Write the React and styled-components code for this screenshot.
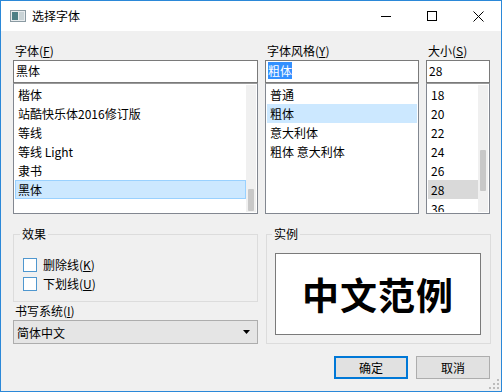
import React from 'react';
import styled, { createGlobalStyle } from 'styled-components';

const Global = createGlobalStyle`
  html, body { margin: 0; padding: 0; background: #f0f0f0; }
  body {
    font-family: "Noto Sans CJK SC", "Noto Sans", sans-serif;
    font-size: 12px;
    color: #000;
  }
  * { box-sizing: border-box; }
`;

const Window = styled.div`
  position: relative;
  width: 502px;
  height: 392px;
  border: 1px solid #2b88d8;
  background: #f0f0f0;
  display: flex;
  flex-direction: column;
  overflow: hidden;
`;

const TitleBar = styled.div`
  height: 30px;
  flex-shrink: 0;
  background: #fff;
  display: flex;
  align-items: center;
`;

const TitleIcon = styled.svg`
  margin-left: 9px;
  width: 16px;
  height: 12px;
`;

const TitleText = styled.div`
  margin-left: 6px;
  flex: 1;
  font-size: 12px;
  line-height: 16px;
`;

const CaptionButton = styled.div`
  width: 46px;
  height: 30px;
  display: flex;
  align-items: center;
  justify-content: center;
`;

const Body = styled.div`
  flex: 1;
  padding: 11px 11px 0 12px;
  display: flex;
  flex-direction: column;
`;

const TopGrid = styled.div`
  display: grid;
  grid-template-columns: 245px 154px 64px;
  column-gap: 7px;
`;

const Column = styled.div`
  display: flex;
  flex-direction: column;
`;

const Label = styled.div`
  height: 18px;
  line-height: 18px;
  padding-left: 2px;
  white-space: nowrap;
`;

const Input = styled.div`
  height: 23px;
  border: 1px solid #7a7a7a;
  background: #fff;
  padding-left: 2px;
  line-height: 20px;
  white-space: nowrap;
`;

const Selected = styled.span`
  background: #3390ff;
  color: #fff;
`;

const List = styled.div`
  height: 131px;
  border: 1px solid #828790;
  border-top-color: #9a9a9a;
  background: #fff;
  padding: 1px;
  display: flex;
  overflow: hidden;
`;

const Items = styled.div`
  flex: 1;
  display: flex;
  flex-direction: column;
  overflow: hidden;
`;

const Item = styled.div`
  flex-shrink: 0;
  height: 19px;
  line-height: 17px;
  padding-left: 2px;
  white-space: nowrap;
  border: 1px solid ${p => (p.$sel === 'focus' ? '#99d1ff' : 'transparent')};
  background: ${p =>
    p.$sel === 'focus' ? '#cce8ff' : p.$sel === 'soft' ? '#cce8ff' : p.$sel === 'gray' ? '#d9d9d9' : 'transparent'};
`;

const Track = styled.div`
  width: 10px;
  background: #f0f0f0;
  display: flex;
  justify-content: center;
`;

const Thumb = styled.div`
  width: 6px;
  border-radius: 1px;
  background: #c8c8c8;
`;

const LowerGrid = styled.div`
  margin-top: 13px;
  display: grid;
  grid-template-columns: 245px 225px;
  column-gap: 8px;
  align-items: start;
`;

const Group = styled.fieldset`
  margin: 0;
  min-width: 0;
  border: 1px solid #dcdcdc;
  padding: ${p => p.$pad};
`;

const Legend = styled.legend`
  padding: 0 2px;
  margin-left: ${p => p.$ml || 0}px;
  line-height: 14px;
  height: 14px;
`;

const CheckRow = styled.div`
  height: 19px;
  display: flex;
  align-items: center;
  padding-left: 3px;
`;

const CheckBox = styled.div`
  width: 14px;
  height: 14px;
  border: 1px solid #4f97cf;
  background: #fff;
  margin-right: 6px;
`;

const Combo = styled.div`
  height: 24px;
  border: 1px solid #adadad;
  background: #e5e5e5;
  display: flex;
  align-items: center;
  padding-left: 3px;
  padding-right: 7px;
`;

const ComboText = styled.div`
  flex: 1;
`;

const SampleBox = styled.div`
  height: 82px;
  border: 1px solid #7a7a7a;
  background: #fff;
  display: flex;
  align-items: center;
  justify-content: center;
  font-family: "Noto Sans CJK SC", sans-serif;
  font-weight: 700;
  font-size: 37px;
  letter-spacing: 1px;
`;

const ButtonRow = styled.div`
  margin-top: 12px;
  display: flex;
  justify-content: flex-end;
  gap: 8px;
`;

const Button = styled.div`
  width: 74px;
  height: 23px;
  background: #e1e1e1;
  border: ${p => (p.$default ? '2px solid #0078d7' : '1px solid #adadad')};
  display: flex;
  align-items: center;
  justify-content: center;
`;

const Grip = styled.svg`
  position: absolute;
  right: 1px;
  bottom: 1px;
  width: 11px;
  height: 11px;
`;

const fonts = ['楷体', '站酷快乐体2016修订版', '等线', '等线 Light', '隶书', '黑体'];
const styles = ['普通', '粗体', '意大利体', '粗体 意大利体'];
const sizes = ['18', '20', '22', '24', '26', '28', '36'];

export default function App() {
  return (
    <>
      <Global />
      <Window>
        <TitleBar>
          <TitleIcon viewBox="0 0 16 12">
            <rect x="0.5" y="0.5" width="15" height="11" fill="#e8ecee" stroke="#8a9aa2" />
            <rect x="2" y="2" width="6" height="8" fill="#4d7f86" />
            <rect x="9" y="2" width="5" height="8" fill="#c9d3d6" />
          </TitleIcon>
          <TitleText>选择字体</TitleText>
          <CaptionButton>
            <svg width="10" height="10" viewBox="0 0 10 10">
              <line x1="0" y1="5.5" x2="10" y2="5.5" stroke="#000" strokeWidth="1" />
            </svg>
          </CaptionButton>
          <CaptionButton>
            <svg width="10" height="10" viewBox="0 0 10 10">
              <rect x="0.5" y="0.5" width="9" height="9" fill="none" stroke="#000" strokeWidth="1" />
            </svg>
          </CaptionButton>
          <CaptionButton>
            <svg width="11" height="11" viewBox="0 0 11 11">
              <path d="M0.5 0.5 L10.5 10.5 M10.5 0.5 L0.5 10.5" stroke="#000" strokeWidth="1" />
            </svg>
          </CaptionButton>
        </TitleBar>
        <Body>
          <TopGrid>
            <Column>
              <Label>字体(<u>F</u>)</Label>
              <Input>黑体</Input>
              <List>
                <Items>
                  {fonts.map((f, i) => (
                    <Item key={f} $sel={i === 5 ? 'focus' : undefined}>{f}</Item>
                  ))}
                </Items>
                <Track>
                  <Thumb style={{ marginTop: 104, height: 22 }} />
                </Track>
              </List>
            </Column>
            <Column>
              <Label>字体风格(<u>Y</u>)</Label>
              <Input><Selected>粗体</Selected></Input>
              <List>
                <Items>
                  {styles.map((s, i) => (
                    <Item key={s} $sel={i === 1 ? 'soft' : undefined}>{s}</Item>
                  ))}
                </Items>
              </List>
            </Column>
            <Column>
              <Label>大小(<u>S</u>)</Label>
              <Input>28</Input>
              <List>
                <Items>
                  {sizes.map((s, i) => (
                    <Item key={s} $sel={i === 5 ? 'gray' : undefined}>{s}</Item>
                  ))}
                </Items>
                <Track>
                  <Thumb style={{ marginTop: 65, height: 41 }} />
                </Track>
              </List>
            </Column>
          </TopGrid>
          <LowerGrid>
            <Column>
              <Group $pad="14px 6px 8px 6px">
                <Legend>效果</Legend>
                <CheckRow><CheckBox />删除线(<u>K</u>)</CheckRow>
                <CheckRow><CheckBox />下划线(<u>U</u>)</CheckRow>
              </Group>
              <Label>书写系统(<u>I</u>)</Label>
              <Combo>
                <ComboText>简体中文</ComboText>
                <svg width="7" height="4" viewBox="0 0 7 4">
                  <path d="M0 0 L7 0 L3.5 4 Z" fill="#000" />
                </svg>
              </Combo>
            </Column>
            <Group $pad="12px 9px 8px 8px">
              <Legend $ml={-3}>实例</Legend>
              <SampleBox>中文范例</SampleBox>
            </Group>
          </LowerGrid>
          <ButtonRow>
            <Button $default>确定</Button>
            <Button>取消</Button>
          </ButtonRow>
        </Body>
        <Grip viewBox="0 0 11 11">
          {[[8, 0], [8, 4], [4, 4], [8, 8], [4, 8], [0, 8]].map(([x, y]) => (
            <rect key={`${x}-${y}`} x={x} y={y} width="2" height="2" fill="#bcbcbc" />
          ))}
        </Grip>
      </Window>
    </>
  );
}
